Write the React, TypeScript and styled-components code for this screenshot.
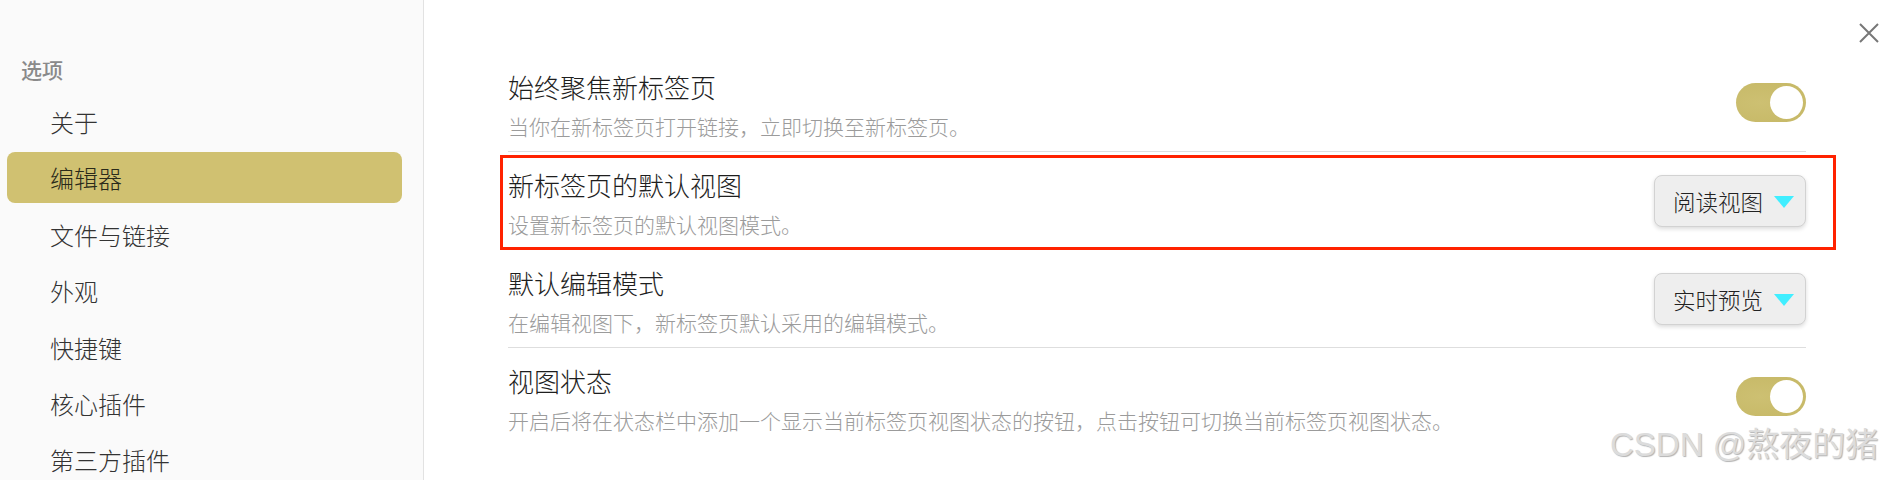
import React from 'react';
import styled, { createGlobalStyle } from 'styled-components';

const GlobalStyle = createGlobalStyle`
  html, body {
    margin: 0;
    padding: 0;
    background: #ffffff;
  }
  body {
    font-family: "Noto Sans CJK SC", "Noto Sans", sans-serif;
    color: #222;
  }
`;

const Page = styled.div`
  position: relative;
  display: flex;
  width: 1894px;
  height: 480px;
  overflow: hidden;
  background: #fff;
`;

const Sidebar = styled.nav`
  width: 423px;
  flex-shrink: 0;
  background: #fafafa;
  border-right: 1px solid #e2e2e2;
  padding-top: 54px;
`;

const SectionTitle = styled.div`
  padding-left: 21px;
  font-size: 21px;
  line-height: 30px;
  font-weight: 500;
  color: #8a8a8a;
  margin-bottom: 12px;
`;

const NavList = styled.ul`
  list-style: none;
  margin: 0;
  padding: 0;
  display: flex;
  flex-direction: column;
  gap: 5.4px;
`;

const NavItem = styled.li<{ $active?: boolean }>`
  height: 51px;
  margin: 0 21px 0 7px;
  padding-left: 43px;
  display: flex;
  align-items: center;
  border-radius: 8px;
  font-size: 24px;
  font-weight: 300;
  color: ${(p) => (p.$active ? '#2a2a1a' : '#333')};
  background: ${(p) => (p.$active ? '#d0c171' : 'transparent')};
`;

const Content = styled.main`
  flex: 1;
  min-width: 0;
  padding: 54px 88px 0 84px;
`;

const Row = styled.div<{ $first?: boolean }>`
  position: relative;
  display: flex;
  align-items: center;
  justify-content: space-between;
  height: ${(p) => (p.$first ? '97px' : '98px')};
  box-sizing: border-box;
  border-top: ${(p) => (p.$first ? 'none' : '1px solid #dedede')};
`;

const Info = styled.div`
  display: flex;
  flex-direction: column;
  align-self: flex-start;
  padding-top: 18px;
`;

const Name = styled.div`
  font-size: 26px;
  line-height: 30px;
  font-weight: 300;
  color: #1e1e1e;
`;

const Desc = styled.div`
  margin-top: 10px;
  font-size: 21px;
  line-height: 28px;
  font-weight: 300;
  color: #9b9b9b;
`;

const Toggle = styled.div<{ $on?: boolean }>`
  width: 70px;
  height: 39px;
  flex-shrink: 0;
  border-radius: 20px;
  box-sizing: border-box;
  padding: 3px;
  display: flex;
  justify-content: ${(p) => (p.$on ? 'flex-end' : 'flex-start')};
  background: radial-gradient(ellipse at 35% 50%, #cdc072 0%, #c6b866 100%);
`;

const Knob = styled.div`
  width: 33px;
  height: 33px;
  border-radius: 50%;
  background: #fff;
`;

const Dropdown = styled.div`
  width: 152px;
  height: 52px;
  flex-shrink: 0;
  box-sizing: border-box;
  display: flex;
  align-items: center;
  padding: 0 12px 0 18px;
  gap: 11px;
  background: #eeeeee;
  border: 1px solid #d2d2d2;
  border-radius: 8px;
  box-shadow: 0 2px 4px rgba(0, 0, 0, 0.14);
  font-size: 22.5px;
  font-weight: 300;
  white-space: nowrap;
  color: #222;
`;

const Caret = styled.span`
  width: 0;
  height: 0;
  border-left: 10.5px solid transparent;
  border-right: 10.5px solid transparent;
  border-top: 12px solid #40eeff;
  margin-top: 2px;
`;

// red annotation frame drawn over the row
const Highlight = styled.div`
  position: absolute;
  z-index: 2;
  left: -8px;
  right: -30px;
  top: 3px;
  bottom: -1px;
  border: 3px solid #ff2200;
  pointer-events: none;
`;

const CloseButton = styled.button`
  position: absolute;
  top: 21px;
  left: 1857px;
  width: 24px;
  height: 24px;
  padding: 0;
  border: none;
  background: transparent;
  display: flex;
  align-items: center;
  justify-content: center;
`;

const Watermark = styled.div`
  position: absolute;
  z-index: 3;
  left: 1610px;
  top: 421px;
  font-family: "Liberation Sans", "Noto Sans CJK SC", sans-serif;
  font-size: 33px;
  line-height: 48px;
  color: #dcdcdc;
  text-shadow: 1px 1px 1px rgba(0, 0, 0, 0.3);
  white-space: nowrap;
`;

const navItems = ['关于', '编辑器', '文件与链接', '外观', '快捷键', '核心插件', '第三方插件'];

export default function App() {
  return (
    <Page>
      <GlobalStyle />
      <Sidebar>
        <SectionTitle>选项</SectionTitle>
        <NavList>
          {navItems.map((t) => (
            <NavItem key={t} $active={t === '编辑器'}>
              {t}
            </NavItem>
          ))}
        </NavList>
      </Sidebar>
      <Content>
        <Row $first>
          <Info>
            <Name>始终聚焦新标签页</Name>
            <Desc>当你在新标签页打开链接，立即切换至新标签页。</Desc>
          </Info>
          <Toggle $on>
            <Knob />
          </Toggle>
        </Row>
        <Row>
          <Info>
            <Name>新标签页的默认视图</Name>
            <Desc>设置新标签页的默认视图模式。</Desc>
          </Info>
          <Dropdown>
            阅读视图
            <Caret />
          </Dropdown>
          <Highlight />
        </Row>
        <Row>
          <Info>
            <Name>默认编辑模式</Name>
            <Desc>在编辑视图下，新标签页默认采用的编辑模式。</Desc>
          </Info>
          <Dropdown>
            实时预览
            <Caret />
          </Dropdown>
        </Row>
        <Row>
          <Info>
            <Name>视图状态</Name>
            <Desc>开启后将在状态栏中添加一个显示当前标签页视图状态的按钮，点击按钮可切换当前标签页视图状态。</Desc>
          </Info>
          <Toggle $on>
            <Knob />
          </Toggle>
        </Row>
      </Content>
      <CloseButton aria-label="关闭">
        <svg width="20" height="20" viewBox="0 0 20 20">
          <path d="M1 1 L19 19 M19 1 L1 19" stroke="#777" strokeWidth="2" fill="none" />
        </svg>
      </CloseButton>
      <Watermark>CSDN @熬夜的猪</Watermark>
    </Page>
  );
}
